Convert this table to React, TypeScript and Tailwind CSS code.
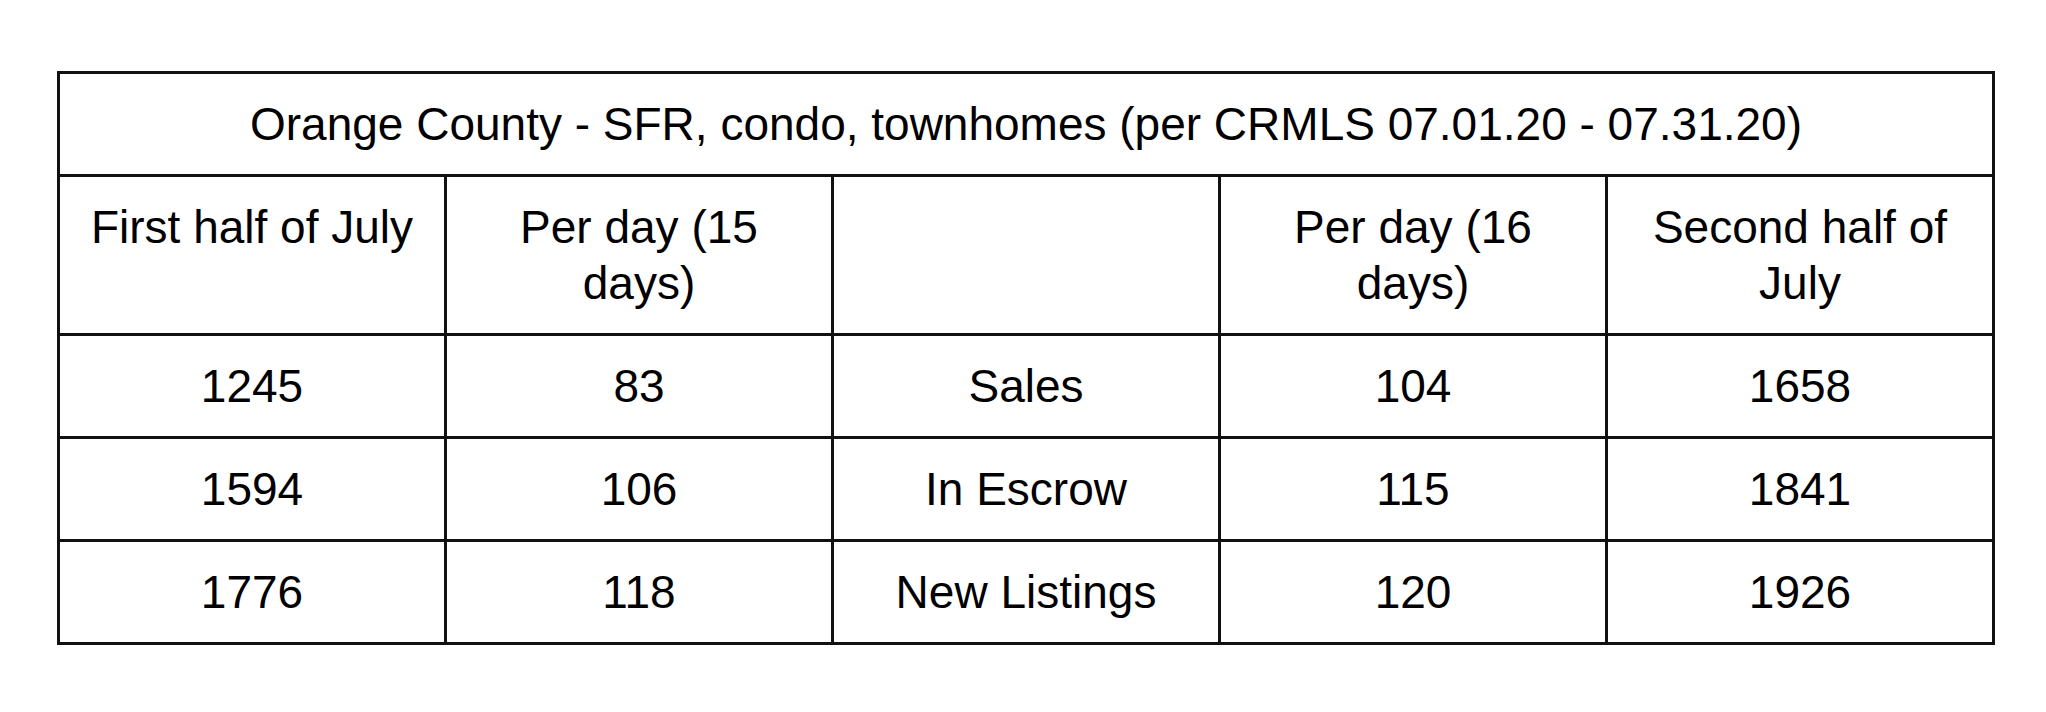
const rows = [
  { first: "1245", perFirst: "83", label: "Sales", perSecond: "104", second: "1658" },
  { first: "1594", perFirst: "106", label: "In Escrow", perSecond: "115", second: "1841" },
  { first: "1776", perFirst: "118", label: "New Listings", perSecond: "120", second: "1926" },
];

const cell = "border-[3px] border-[#111] text-center align-top px-[28px] py-[22px]";

export default function App() {
  return (
    <div className="w-[2046px] h-[712px] bg-white pl-[57px] pt-[71px] font-['Liberation_Sans',Arial,sans-serif] text-black text-[46px] leading-[56px]">
      <table className="w-[1938px] table-fixed border-collapse">
        <tbody>
          <tr>
            <td colSpan={5} className={cell}>
              Orange County - SFR, condo, townhomes (per CRMLS 07.01.20 - 07.31.20)
            </td>
          </tr>
          <tr>
            <td className={cell}>First half of July</td>
            <td className={cell}>Per day (15 days)</td>
            <td className={cell}></td>
            <td className={cell}>Per day (16 days)</td>
            <td className={cell}>Second half of July</td>
          </tr>
          {rows.map((r) => (
            <tr key={r.label}>
              <td className={cell}>{r.first}</td>
              <td className={cell}>{r.perFirst}</td>
              <td className={cell}>{r.label}</td>
              <td className={cell}>{r.perSecond}</td>
              <td className={cell}>{r.second}</td>
            </tr>
          ))}
        </tbody>
      </table>
    </div>
  );
}
